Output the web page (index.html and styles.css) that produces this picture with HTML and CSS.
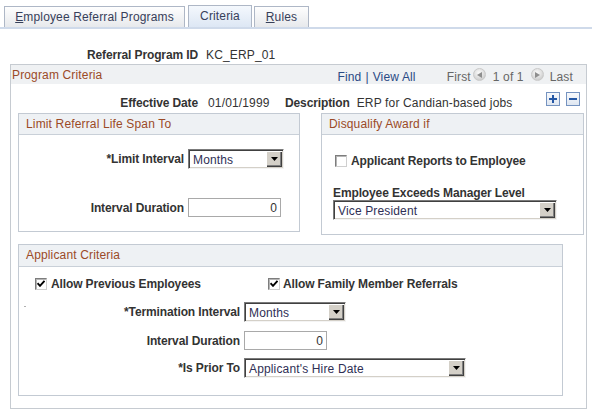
FILE: index.html
```html
<!DOCTYPE html>
<html>
<head>
<meta charset="utf-8">
<title>Criteria</title>
<link rel="stylesheet" href="styles.css">
</head>
<body>
<div class="tabbar">
  <div class="tab tab-erp"><u>E</u>mployee Referral Programs</div>
  <div class="tab tab-sel">Criteria</div>
  <div class="tab tab-rules"><u>R</u>ules</div>
</div>

<div class="idrow">
  <span class="lbl idlbl">Referral Program ID</span>
  <span class="idval">KC_ERP_01</span>
</div>

<div class="outer">
  <div class="outer-head">
    <span class="title">Program Criteria</span>
    <div class="nav">
      <span class="link">Find</span>
      <span class="sep">|</span>
      <span class="link">View All</span>
      <span class="gray first">First</span>
      <span class="arrow arrow-l"><svg width="5" height="6" viewBox="0 0 5 6"><path d="M5 0V6L0 3Z" fill="#8e8e8e"/></svg></span>
      <span class="gray count">1 of 1</span>
      <span class="arrow arrow-r"><svg width="5" height="6" viewBox="0 0 5 6"><path d="M0 0V6L5 3Z" fill="#8e8e8e"/></svg></span>
      <span class="gray last">Last</span>
    </div>
  </div>

  <div class="effrow">
    <span class="lbl efflbl">Effective Date</span>
    <span class="effval">01/01/1999</span>
    <span class="lbl desclbl">Description</span>
    <span class="descval">ERP for Candian-based jobs</span>
    <div class="rowbtns">
      <span class="btn"><svg width="8" height="8" viewBox="0 0 8 8"><path d="M0 4H8M4 0V8" stroke="#2457a5" stroke-width="2"/></svg></span>
      <span class="btn"><svg width="8" height="8" viewBox="0 0 8 8"><path d="M0 4H8" stroke="#2457a5" stroke-width="2"/></svg></span>
    </div>
  </div>

  <div class="boxrow">
    <div class="box box-limit">
      <div class="box-head">Limit Referral Life Span To</div>
      <div class="limit-body">
        <div class="frow">
          <span class="lbl flbl limit-lbl">*Limit Interval</span>
          <div class="sel sel-limit"><span class="sel-text">Months</span><span class="sel-btn"><svg width="7" height="4" viewBox="0 0 7 4"><path d="M0 0H7L3.5 4Z" fill="#000"/></svg></span></div>
        </div>
        <div class="frow frow-dur">
          <span class="lbl flbl limit-lbl">Interval Duration</span>
          <div class="inp inp-limit">0</div>
        </div>
      </div>
    </div>

    <div class="box box-disq">
      <div class="box-head">Disqualify Award if</div>
      <div class="disq-body">
        <div class="cbrow disq-cb">
          <span class="cb"></span>
          <span class="lbl cblbl">Applicant Reports to Employee</span>
        </div>
        <div class="lbl mgr-lbl">Employee Exceeds Manager Level</div>
        <div class="sel sel-mgr"><span class="sel-text">Vice President</span><span class="sel-btn"><svg width="7" height="4" viewBox="0 0 7 4"><path d="M0 0H7L3.5 4Z" fill="#000"/></svg></span></div>
      </div>
    </div>
  </div>

  <div class="box box-app">
    <div class="box-head box-head-app">Applicant Criteria</div>
    <div class="cbrow app-cb">
      <div class="cbitem cbitem-first">
        <span class="cb"><svg width="8" height="7" viewBox="0 0 8 7"><path d="M0.5 3.2L3 5.8L7.5 0.8" stroke="#000" stroke-width="1.9" fill="none"/></svg></span>
        <span class="lbl cblbl">Allow Previous Employees</span>
      </div>
      <div class="cbitem">
        <span class="cb"><svg width="8" height="7" viewBox="0 0 8 7"><path d="M0.5 3.2L3 5.8L7.5 0.8" stroke="#000" stroke-width="1.9" fill="none"/></svg></span>
        <span class="lbl cblbl cblbl-fam">Allow Family Member Referrals</span>
      </div>
    </div>
    <div class="frow frow-term">
      <span class="dash"></span>
      <span class="lbl flbl term-lbl">*Termination Interval</span>
      <div class="sel sel-term"><span class="sel-text">Months</span><span class="sel-btn"><svg width="7" height="4" viewBox="0 0 7 4"><path d="M0 0H7L3.5 4Z" fill="#000"/></svg></span></div>
    </div>
    <div class="frow frow-adur">
      <span class="lbl flbl app-lbl">Interval Duration</span>
      <div class="inp inp-app">0</div>
    </div>
    <div class="frow frow-prior">
      <span class="lbl flbl app-lbl">*Is Prior To</span>
      <div class="sel sel-prior"><span class="sel-text">Applicant's Hire Date</span><span class="sel-btn"><svg width="7" height="4" viewBox="0 0 7 4"><path d="M0 0H7L3.5 4Z" fill="#000"/></svg></span></div>
    </div>
  </div>
</div>
</body>
</html>
```

FILE: styles.css
```css
* { box-sizing: border-box; }
html, body { margin: 0; padding: 0; background: #fff; }
body {
  font-family: "Liberation Sans", Arial, sans-serif;
  font-size: 12px;
  letter-spacing: 0.15px;
  color: #333;
  width: 592px;
  height: 416px;
  overflow: hidden;
}

/* tabs */
.tabbar {
  display: flex;
  align-items: flex-end;
  height: 29px;
  padding-left: 4px;
  border-bottom: 2px solid #cfdaea;
}
.tab {
  height: 21px;
  line-height: 20px;
  text-align: center;
  border: 1px solid #aeb7c6;
  border-bottom: none;
  background: linear-gradient(#fefefe, #e7e9ec);
  color: #37405a;
}
.tab u { text-decoration: underline; text-underline-offset: 1px; }
.tab-erp { width: 181px; }
.tab-sel {
  width: 64px;
  height: 22px;
  line-height: 21px;
  margin-left: 3px;
  background: linear-gradient(#f4f8fd, #dde7f4);
}
.tab-rules { width: 55px; margin-left: 2px; }

.lbl { font-weight: bold; color: #333; letter-spacing: -0.12px; }

/* id row */
.idrow { display: flex; margin-top: 19px; line-height: 14px; }
.idlbl { width: 198px; text-align: right; }
.idval { margin-left: 8px; }

/* outer group */
.outer {
  margin: 2px 0 0 10px;
  width: 577px;
  height: 345px;
  border: 1px solid #c6cbd1;
}
.outer-head {
  display: flex;
  height: 19px;
  background: #eff1f3;
  line-height: 14px;
}
.title { padding: 3px 0 0 1px; color: #9b4a27; }
.nav {
  margin-left: auto;
  display: flex;
  align-items: flex-start;
  padding: 5px 13px 0 0;
}
.link { color: #2a4a85; }
.sep { color: #2a4a85; margin: 0 4px; }
.gray { color: #666; }
.first { margin-left: 31px; }
.arrow {
  width: 13px;
  height: 13px;
  margin-top: -2px;
  border-radius: 50%;
  background: radial-gradient(circle at 45% 35%, #fbfbfb 0, #e2e2e2 45%, #bdbdbd 100%);
  border: 1px solid #c9c9c9;
  display: flex;
  align-items: center;
  justify-content: center;
}
.arrow-l { margin-left: 2px; margin-right: 7px; }
.arrow-r { margin-left: 7px; margin-right: 6px; }

/* effective row */
.effrow {
  display: flex;
  align-items: flex-start;
  height: 29px;
  line-height: 14px;
}
.efflbl { width: 187px; text-align: right; margin-top: 12px; }
.effval { margin: 12px 0 0 10px; width: 77px; }
.desclbl { margin-top: 12px; }
.descval { margin: 12px 0 0 7px; }
.rowbtns {
  margin: 8px 6px 0 auto;
  display: flex;
  gap: 6px;
}
.btn {
  width: 14px;
  height: 14px;
  border: 1px solid #7593c0;
  background: linear-gradient(#f7f9fc, #dfe7f1);
  display: flex;
  align-items: center;
  justify-content: center;
}

/* boxes */
.boxrow {
  display: flex;
  align-items: flex-start;
  padding-left: 7px;
}
.box { border: 1px solid #c3cad3; }
.box-limit { width: 282px; height: 119px; }
.box-disq { width: 263px; height: 122px; margin-left: 21px; }
.box-head {
  height: 21px;
  padding: 3px 0 0 7px;
  line-height: 14px;
  color: #9b4a27;
  background: #eef1f4;
  border-bottom: 1px solid #c9d0d8;
}
.box-head-app { height: 22px; }

.frow { display: flex; align-items: flex-start; }
.flbl { padding-top: 3px; line-height: 14px; text-align: right; }
.limit-body { padding-top: 14px; }
.limit-lbl { width: 165px; }
.frow-dur { margin-top: 29px; }

/* select */
.sel {
  display: flex;
  align-items: center;
  height: 20px;
  margin-left: 4px;
  background: #fff;
  border: 1px solid;
  border-color: #7b7b7b #f4f4f4 #f4f4f4 #7b7b7b;
  box-shadow: inset 1px 1px 0 #404040, inset -1px -1px 0 #d4d0c8;
}
.sel-text {
  flex: 1;
  padding: 1px 0 0 4px;
  line-height: 14px;
  color: #2f2f55;
  white-space: nowrap;
  overflow: hidden;
}
.sel-btn {
  width: 16px;
  height: 16px;
  margin-right: 1px;
  background: #d4d0c8;
  box-shadow: inset 1px 1px 0 #fff, inset -1px -1px 0 #404040, inset -2px -2px 0 #808080;
  display: flex;
  align-items: center;
  justify-content: center;
}
.sel-limit { width: 96px; }
.sel-mgr { width: 224px; margin: 0 0 0 11px; }
.sel-term { width: 102px; }
.sel-prior { width: 222px; }

/* text input */
.inp {
  height: 19px;
  margin-left: 4px;
  border: 1px solid #a9a9a9;
  background: #fff;
  text-align: right;
  padding: 1px 3px 0 0;
  line-height: 17px;
  color: #333;
}
.inp-limit { width: 93px; }
.inp-app { width: 83px; }

/* checkboxes */
.cbrow { display: flex; align-items: center; line-height: 14px; }
.cb {
  width: 12px;
  height: 12px;
  flex: none;
  border: 1px solid;
  border-color: #7d7d7d #cfcfcf #cfcfcf #7d7d7d;
  background: #fff;
  box-shadow: inset 1px 1px 0 #b5b5b5;
  display: flex;
  align-items: center;
  justify-content: center;
}
.cblbl { margin-left: 4px; padding-top: 1px; }
.cblbl-fam { margin-left: 3px; }
.disq-body { padding-top: 18px; }
.disq-cb { padding-left: 13px; }
.mgr-lbl { margin-top: 18px; padding-left: 11px; line-height: 14px; }

.box-app { width: 545px; height: 152px; margin: 9px 0 0 7px; }
.app-cb { margin-top: 9px; padding-left: 16px; }
.cbitem { display: flex; align-items: center; }
.cbitem-first { width: 233px; }
.app-lbl { width: 221px; }
.dash {
  flex: none;
  width: 2px;
  height: 1px;
  margin: 4px 0 0 5px;
  background: #b0b0b0;
}
.term-lbl { width: 214px; }
.frow-term { margin-top: 11px; }
.frow-adur { margin-top: 9px; }
.frow-prior { margin-top: 8px; }
```
